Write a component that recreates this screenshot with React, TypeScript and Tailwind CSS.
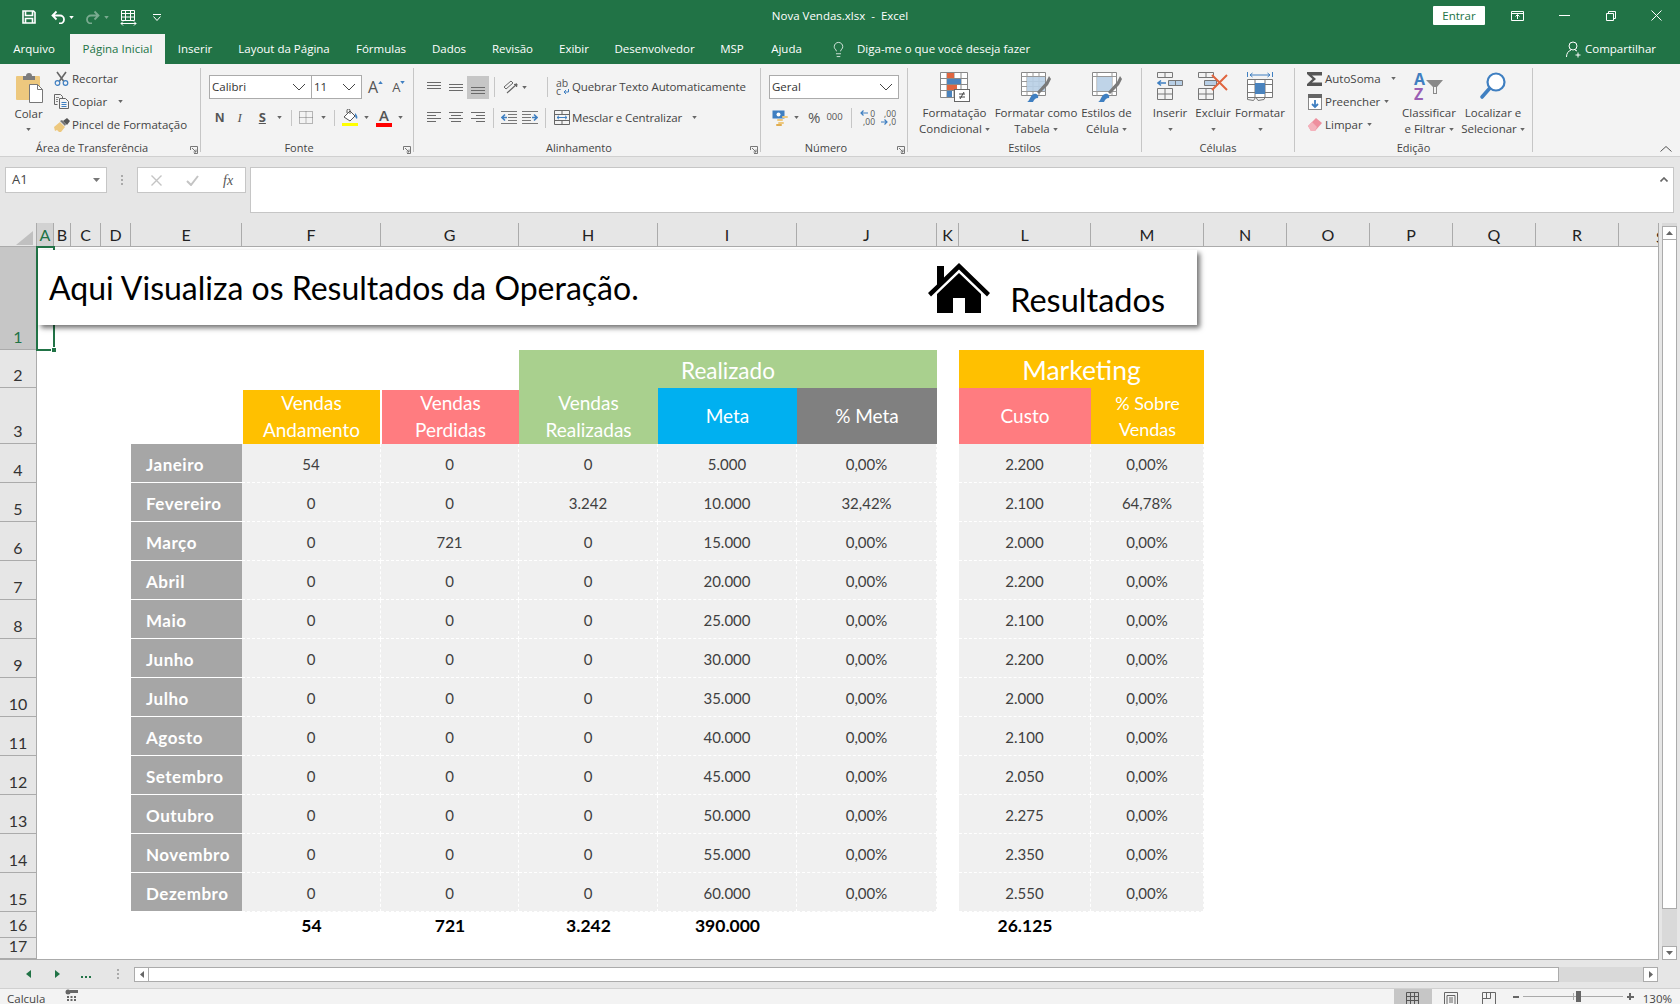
import React, { FC, ReactNode } from 'react'
import { Lightbulb } from 'lucide-react'

type Sale = { name: string; f: string; g: string; h: string; i: string; j: string; l: string; m: string }

const SALES: Sale[] = [
  { name: 'Janeiro', f: '54', g: '0', h: '0', i: '5.000', j: '0,00%', l: '2.200', m: '0,00%' },
  { name: 'Fevereiro', f: '0', g: '0', h: '3.242', i: '10.000', j: '32,42%', l: '2.100', m: '64,78%' },
  { name: 'Março', f: '0', g: '721', h: '0', i: '15.000', j: '0,00%', l: '2.000', m: '0,00%' },
  { name: 'Abril', f: '0', g: '0', h: '0', i: '20.000', j: '0,00%', l: '2.200', m: '0,00%' },
  { name: 'Maio', f: '0', g: '0', h: '0', i: '25.000', j: '0,00%', l: '2.100', m: '0,00%' },
  { name: 'Junho', f: '0', g: '0', h: '0', i: '30.000', j: '0,00%', l: '2.200', m: '0,00%' },
  { name: 'Julho', f: '0', g: '0', h: '0', i: '35.000', j: '0,00%', l: '2.000', m: '0,00%' },
  { name: 'Agosto', f: '0', g: '0', h: '0', i: '40.000', j: '0,00%', l: '2.100', m: '0,00%' },
  { name: 'Setembro', f: '0', g: '0', h: '0', i: '45.000', j: '0,00%', l: '2.050', m: '0,00%' },
  { name: 'Outubro', f: '0', g: '0', h: '0', i: '50.000', j: '0,00%', l: '2.275', m: '0,00%' },
  { name: 'Novembro', f: '0', g: '0', h: '0', i: '55.000', j: '0,00%', l: '2.350', m: '0,00%' },
  { name: 'Dezembro', f: '0', g: '0', h: '0', i: '60.000', j: '0,00%', l: '2.550', m: '0,00%' }
]

const TABS = [
  { label: 'Inserir', w: 'w-[60px]' },
  { label: 'Layout da Página', w: 'w-[118px]' },
  { label: 'Fórmulas', w: 'w-[76px]' },
  { label: 'Dados', w: 'w-[60px]' },
  { label: 'Revisão', w: 'w-[67px]' },
  { label: 'Exibir', w: 'w-[56px]' },
  { label: 'Desenvolvedor', w: 'w-[105px]' },
  { label: 'MSP', w: 'w-[50px]' },
  { label: 'Ajuda', w: 'w-[59px]' }
]

const COLUMNS = ['B', 'C', 'D', 'E', 'F', 'G', 'H', 'I', 'J', 'K', 'L', 'M', 'N', 'O', 'P', 'Q', 'R']

const styles = {
  cell: 'flex items-center justify-center border-r border-b border-dashed border-white bg-[#f0f0f0] pt-[2px] text-[15px] text-[#404040]',
  total: 'flex items-center justify-center pt-[2px] text-[17.5px] font-bold text-black',
  rowHead: 'col-start-1 flex items-end justify-center overflow-hidden border-r border-b border-[#ababab] bg-[#e6e6e6] pb-[3px] text-[16px] leading-[18px] text-[#333]',
  colHead: 'flex items-center justify-center border-r border-b border-[#ababab] bg-[#e6e6e6] text-[16px] text-[#222]'
}

const Caret: FC<{ className?: string }> = ({ className = '' }) => (
  <svg viewBox="0 0 6 4" className={`h-[3px] w-[5px] shrink-0 ${className}`}>
    <path d="M0 0h6L3 4z" fill="#666" />
  </svg>
)

const Launcher = () => (
  <svg viewBox="0 0 8 8" className="absolute right-[2px] bottom-[-2px] h-[8px] w-[8px]" fill="none" stroke="#777" strokeWidth="1">
    <path d="M.5 4V.5H7.5V7.5H4M2 2l4 4M3.5 6H6V3.5" />
  </svg>
)

const Group: FC<{ label: string; launcher?: boolean; w: string; children: ReactNode }> = ({ label, launcher, w, children }) => (
  <div className={`relative mt-[4px] flex h-[84px] shrink-0 flex-col border-r border-[#c6c6c6] ${w}`}>
    <div className="flex h-[70px] overflow-visible">{children}</div>
    <div className={`mt-auto -mb-[3px] h-[15px] text-center text-[11px] leading-[15px] whitespace-nowrap text-[#444] ${launcher ? 'pr-[16px]' : ''}`}>{label}</div>
    {launcher && <Launcher />}
  </div>
)

const SmallRow: FC<{ icon: ReactNode; text: string; caret?: string }> = ({ icon, text, caret }) => (
  <div className="flex h-[23px] items-center whitespace-nowrap">
    <span className="flex w-[19px] shrink-0 justify-center">{icon}</span>
    <span className="ml-[1px]">{text}</span>
    {caret && <Caret className={caret} />}
  </div>
)

const BigButton: FC<{ w: string; icon: ReactNode; line1: string; line2?: string }> = ({ w, icon, line1, line2 }) => (
  <div className={`flex shrink-0 flex-col items-center pt-[4px] leading-[16px] whitespace-nowrap ${w}`}>
    <div className="flex h-[30px] items-start justify-center">{icon}</div>
    <div className="mt-[3px]">{line1}</div>
    <div className="flex h-[16px] items-center justify-center gap-[3px]">
      {line2}
      <Caret />
    </div>
  </div>
)

const SelectBox: FC<{ w: string; text: string; className?: string }> = ({ w, text, className = '' }) => (
  <div className={`flex h-[24px] shrink-0 items-center justify-between border border-[#ababab] bg-white pr-[5px] pl-[2px] text-[#333] ${w} ${className}`}>
    <span>{text}</span>
    <svg viewBox="0 0 14 8" className="h-[8px] w-[14px]" fill="none" stroke="#444" strokeWidth="1">
      <path d="M1 1l6 6 6-6" />
    </svg>
  </div>
)

const Lines: FC<{ kind: 'top' | 'middle' | 'bottom' | 'left' | 'center' | 'right' }> = ({ kind }) => {
  const paths = {
    top: 'M0 1.5h14M0 4.5h14M0 7.5h14',
    middle: 'M0 3.5h14M0 6.5h14M0 9.5h14',
    bottom: 'M0 6.5h14M0 9.5h14M0 12.5h14',
    left: 'M0 1.5h14M0 4.5h9M0 7.5h14M0 10.5h9',
    center: 'M0 1.5h14M2 4.5h10M0 7.5h14M2 10.5h10',
    right: 'M0 1.5h14M5 4.5h9M0 7.5h14M5 10.5h9'
  }
  return (
    <svg viewBox="0 0 14 13" className="h-[13px] w-[14px]" fill="none" stroke="#6a6a6a" strokeWidth="1">
      <path d={paths[kind]} />
    </svg>
  )
}

const ColarIcon = () => (
  <svg viewBox="0 0 28 31" className="h-[31px] w-[28px]">
    <rect x="1" y="4" width="24" height="24" rx="1" fill="#edc87e" />
    <path d="M8 4h3a3 3 0 016 0h3v4H8z" fill="#7c7c7c" />
    <path d="M14.5 12.5h8l5 5v13h-13z" fill="#fff" stroke="#777" />
    <path d="M22.5 12.5v5h5" fill="none" stroke="#777" />
  </svg>
)

const ScissorsIcon = () => (
  <svg viewBox="0 0 15 15" className="h-[15px] w-[15px]" fill="none">
    <path d="M3 1l6.5 9M12 1L5.5 10" stroke="#666" strokeWidth="1.6" />
    <circle cx="3.5" cy="12" r="2.3" stroke="#3f7fc1" strokeWidth="1.2" />
    <circle cx="11.5" cy="12" r="2.3" stroke="#3f7fc1" strokeWidth="1.2" />
  </svg>
)

const CopyIcon = () => (
  <svg viewBox="0 0 15 15" className="h-[15px] w-[15px]" fill="none" stroke="#666">
    <path d="M.5.5h6l2 2v2M.5.5v10h3" />
    <path d="M5.5 4.5h6l3 3v7h-9z" fill="#f3f3f3" />
    <path d="M7.5 8.5h5M7.5 10.5h5M7.5 12.5h5" stroke="#3f7fc1" />
    <path d="M2 3.5h3M2 5.5h2M2 7.5h2" stroke="#888" />
  </svg>
)

const BrushIcon = () => (
  <svg viewBox="0 0 16 14" className="h-[14px] w-[16px]">
    <path d="M0 9l6-5 5 5-4 5H5L3 12 1 13z" fill="#edc87e" />
    <path d="M6 3l2-1 4 4-1 2z" fill="#777" />
    <path d="M9 3l4-3 3 3-3 4z" fill="#555" />
  </svg>
)

const BordersIcon = () => (
  <svg viewBox="0 0 14 13" className="h-[13px] w-[14px]" fill="none" stroke="#777" strokeDasharray="1 1">
    <path d="M.5.5h13v12H.5zM7 .5v12M.5 6.5h13" />
  </svg>
)

const FillIcon = () => (
  <svg viewBox="0 0 16 17" className="h-[17px] w-[16px]">
    <path d="M2 8l6-6 5 5-5 5z" fill="#fff" stroke="#555" />
    <path d="M5 4V1.5a1.5 1.5 0 013 0V5" fill="none" stroke="#555" />
    <path d="M13 4c2 2 3 4 2 6-2-1-2-3-2-6z" fill="#3f7fc1" />
    <rect y="14" width="16" height="3.5" fill="#ffff00" />
  </svg>
)

const FontColorIcon = () => (
  <div className="flex w-[16px] flex-col items-center">
    <span className="text-[15px] leading-[13px] font-semibold text-[#555]">A</span>
    <span className="mt-[1px] h-[4px] w-[16px] bg-[#ff0000]" />
  </div>
)

const OrientationIcon = () => (
  <svg viewBox="0 0 16 14" className="h-[14px] w-[16px]" fill="none" stroke="#666">
    <path d="M2 7l7-6 2 2-7 6z" />
    <path d="M5 13l10-9M15 4l-3 .5M15 4l-.5 3" strokeWidth="1.2" />
  </svg>
)

const IndentIcon: FC<{ flip?: boolean }> = ({ flip }) => (
  <svg viewBox="0 0 16 13" className={`h-[13px] w-[16px] ${flip ? '-scale-x-100' : ''}`} fill="none">
    <path d="M0 .5h16M7 3.5h9M7 6.5h9M7 9.5h9M0 12.5h16" stroke="#777" />
    <path d="M6 6.5H1M4 3.5l-3 3 3 3" stroke="#3f7fc1" strokeWidth="1.6" />
  </svg>
)

const WrapIcon = () => (
  <svg viewBox="0 0 13 17" className="h-[17px] w-[13px] overflow-visible">
    <text x="0" y="8" fontFamily="Open Sans, sans-serif" fontSize="10.5" fill="#555">ab</text>
    <text x="0" y="16" fontFamily="Open Sans, sans-serif" fontSize="10.5" fill="#555">c</text>
    <path d="M12.5 10v3H8M10 11l-2 2 2 2" fill="none" stroke="#3f7fc1" />
  </svg>
)

const MergeIcon = () => (
  <svg viewBox="0 0 16 15" className="h-[15px] w-[16px]" fill="none" stroke="#666">
    <path d="M.5.5h15v14H.5zM.5 4.5h15M.5 10.5h15M8 .5v4M8 10.5v4" />
    <path d="M3 7.5h10M5 5.8L3 7.5l2 1.7M11 5.8l2 1.7-2 1.7" stroke="#3f7fc1" />
  </svg>
)

const CurrencyIcon = () => (
  <svg viewBox="0 0 16 16" className="h-[16px] w-[16px]">
    <rect x=".5" y=".5" width="12" height="8" fill="#3f7fc1" />
    <circle cx="6.5" cy="4.5" r="2" fill="#fff" />
    <rect x="5" y="9" width="6" height="2" rx="1" fill="#edc87e" />
    <rect x="6" y="12" width="6" height="2" rx="1" fill="#edc87e" />
    <rect x="10" y="6" width="6" height="2" rx="1" fill="#edc87e" />
    <rect x="4" y="14" width="6" height="2" rx="1" fill="#e0ad50" />
  </svg>
)

// stacked digits with the small blue arrow, decrease and increase decimals
const DecimalIcon: FC<{ up?: boolean }> = ({ up }) => (
  <svg viewBox="0 0 15 17" className="h-[17px] w-[15px] overflow-visible">
    <text x="15" y="7.5" textAnchor="end" fontFamily="Open Sans, sans-serif" fontSize="8.5" fill="#555">{up ? '0' : ',00'}</text>
    <text x="15" y="15.5" textAnchor="end" fontFamily="Open Sans, sans-serif" fontSize="8.5" fill="#555">{up ? ',00' : ',0'}</text>
    {up ? (
      <path d="M8 4H1M3.5 1.5L1 4l2.5 2.5" fill="none" stroke="#3f7fc1" strokeWidth="1.2" />
    ) : (
      <path d="M0 13h6M3.5 10.5L6 13l-2.5 2.5" fill="none" stroke="#3f7fc1" strokeWidth="1.2" />
    )}
  </svg>
)

const CondFormatIcon = () => (
  <svg viewBox="0 0 30 30" className="h-[30px] w-[30px]">
    <path d="M.5.5h27v25H.5zM7 .5v25M14 .5v25M21 .5v25M.5 6.5h27M.5 12.5h27M.5 18.5h27" fill="#fff" stroke="#888" />
    <rect x="7" y="1" width="7" height="5" fill="#e0653f" />
    <rect x="7" y="7" width="14" height="5" fill="#4a83bd" />
    <rect x="7" y="13" width="10" height="5" fill="#e0653f" />
    <rect x="7" y="19" width="5" height="6" fill="#4a83bd" />
    <rect x="14.5" y="17.5" width="15" height="12" fill="#fff" stroke="#666" />
    <path d="M19 22h6M19 25h6M24 20l-4 7" stroke="#444" fill="none" />
  </svg>
)

const TableStyleIcon: FC<{ single?: boolean }> = ({ single }) => (
  <svg viewBox="0 0 30 30" className="h-[30px] w-[30px]">
    <path d="M.5.5h24v23H.5z" fill="#fff" stroke="#888" />
    <path d={single ? 'M.5 4.5h24M.5 19.5h24M5 .5v23M20 .5v23' : 'M.5 4.5h24M.5 9.5h24M.5 14.5h24M.5 19.5h24M6 .5v23M12 .5v23M18 .5v23'} stroke="#999" fill="none" />
    <rect x={single ? 5 : 6} y="5" width={single ? 15 : 18} height="14" fill="#b8cfe6" opacity="0.9" />
    <path d="M16 20l9-10 3-6 2 3-3 6-9 9z" fill="#7a7a7a" />
    <path d="M6 30c3-1 3-7 7-8 3-1 5 2 4 4-3 0-4 2-5 4z" fill="#3f7fc1" />
  </svg>
)

const InsertIcon = () => (
  <svg viewBox="0 0 26 28" className="h-[28px] w-[26px]" fill="none" stroke="#777">
    <path d="M.5.5h15v5H.5zM8 .5v5M.5 16.5h15v11H.5zM.5 22h15M8 16.5v11" />
    <path d="M11.5 8.5h14v5h-14zM18.5 8.5v5" fill="#b8cfe6" />
    <path d="M9 11H1M4 8.5L1 11l3 2.5" stroke="#3f7fc1" strokeWidth="1.5" />
  </svg>
)

const DeleteIcon = () => (
  <svg viewBox="0 0 30 28" className="h-[28px] w-[30px]" fill="none" stroke="#777">
    <path d="M.5.5h15v5H.5zM8 .5v5M.5 16.5h15v11H.5zM.5 22h15M8 16.5v11" />
    <path d="M6.5 8.5h12v5h-12z" fill="#b8cfe6" />
    <path d="M14 3l15 15M29 3L14 18" stroke="#e0653f" strokeWidth="2" />
  </svg>
)

const FormatIcon = () => (
  <svg viewBox="0 0 26 30" className="h-[30px] w-[26px]" fill="none" stroke="#777">
    <path d="M3 3h20M3 3l2.5-2M3 3l2.5 2M23 3l-2.5-2M23 3l-2.5 2M.5 0v5M25.5 0v5" stroke="#3f7fc1" />
    <path d="M.5 7.5h25v18H.5zM8 7.5v18M18 7.5v18M.5 12.5h25M.5 20.5h25" fill="#fff" />
    <rect x="8" y="11" width="10" height="11" fill="#4a83bd" stroke="none" />
    <path d="M.5 25.5v2l6 1 2-3M9 25.5l2 3 6-1 1-2" />
  </svg>
)

const SortIcon = () => (
  <svg viewBox="0 0 30 30" className="h-[30px] w-[30px] overflow-visible">
    <text x="0" y="13" fontFamily="Open Sans, sans-serif" fontWeight="700" fontSize="16" fill="#3f7fc1">A</text>
    <text x="0" y="28" fontFamily="Open Sans, sans-serif" fontWeight="700" fontSize="16" fill="#9a5fb4">Z</text>
    <path d="M12 8h17l-6 7v7h-4v-7z" fill="#8a8a8a" />
    <path d="M20 15v6h2v-6z" fill="#f3f3f3" />
  </svg>
)

const FindIcon = () => (
  <svg viewBox="0 0 28 28" className="h-[28px] w-[28px]" fill="none" stroke="#3f7fc1">
    <circle cx="17" cy="10" r="8.5" strokeWidth="2.2" fill="#fff" />
    <path d="M10.5 16.5L3 25" strokeWidth="3.6" strokeLinecap="round" />
  </svg>
)

const SigmaIcon = () => (
  <svg viewBox="0 0 15 14" className="h-[14px] w-[15px]">
    <path d="M0 0h15v3.5H5l4 3.5-4 3.5h10V14H0v-2l5.5-5L0 2z" fill="#555" />
  </svg>
)

const FillDownIcon = () => (
  <svg viewBox="0 0 14 16" className="h-[16px] w-[14px]">
    <rect x=".5" y=".5" width="13" height="15" fill="#fff" stroke="#888" />
    <rect width="14" height="4" fill="#666" />
    <path d="M7 6v7M4 10l3 3 3-3" fill="none" stroke="#3f7fc1" strokeWidth="1.8" />
  </svg>
)

const EraserIcon = () => (
  <svg viewBox="0 0 14 13" className="h-[13px] w-[14px]">
    <path d="M0 8l8-8 6 5-7 8H3z" fill="#ee8f9e" />
    <path d="M0 8l4-4 5 5-2 4H3z" fill="#f4b2bc" />
  </svg>
)

const TitleBar = () => (
  <div className="grid h-[34px] grid-cols-3 items-center bg-[#217346] text-white">
    <div className="flex items-center pl-[22px]">
      <svg viewBox="0 0 14 14" className="h-[14px] w-[14px]" fill="none" stroke="#fff" strokeWidth="1.6">
        <path d="M1 1h10.5L13 2.5V13H1zM3.5 1v4.5h7V1M3.5 13V8.5h7V13" />
      </svg>
      <svg viewBox="0 0 14 14" className="ml-[15px] h-[14px] w-[14px]" fill="none" stroke="#fff" strokeWidth="1.8">
        <path d="M5.5 1.5L1.5 5.5l4 4M1.5 5.5H9a4 4 0 010 8H8" />
      </svg>
      <Caret className="ml-[4px] [&_path]:fill-white" />
      <svg viewBox="0 0 14 14" className="ml-[12px] h-[14px] w-[14px] opacity-40" fill="none" stroke="#fff" strokeWidth="1.8">
        <path d="M8.5 1.5l4 4-4 4M12.5 5.5H5a4 4 0 000 8h1" />
      </svg>
      <Caret className="ml-[4px] opacity-40 [&_path]:fill-white" />
      <svg viewBox="0 0 17 17" className="ml-[11px] h-[17px] w-[17px]" fill="none" stroke="#fff">
        <path d="M1.5 1.5h13v10h-13zM1.5 4.5h13M5.5 1.5v10M10.5 1.5v10M1.5 8h13" />
        <path d="M1 14.5h15M3 12.5l-2 2 2 2M14 12.5l2 2-2 2" />
      </svg>
      <svg viewBox="0 0 8 7" className="ml-[16px] h-[7px] w-[8px]" fill="none" stroke="#fff">
        <path d="M0 .5h8M.5 2.5l3.5 4 3.5-4" />
      </svg>
    </div>
    <div className="mb-[2px] text-center whitespace-pre">Nova Vendas.xlsx  -  Excel</div>
    <div className="flex items-center justify-end">
      <div className="mb-[3px] flex h-[19px] w-[52px] items-center justify-center rounded-[1px] bg-white text-[#217346]">Entrar</div>
      <svg viewBox="0 0 13 10" className="mb-[3px] ml-[26px] h-[10px] w-[13px]" fill="none" stroke="#fff">
        <path d="M.5.5h12v9H.5zM.5 2.5h12M6.5 8V4M4.5 5.5l2-2 2 2" />
      </svg>
      <div className="mb-[3px] ml-[35px] h-[1px] w-[11px] bg-white" />
      <svg viewBox="0 0 10 10" className="mb-[3px] ml-[36px] h-[10px] w-[10px]" fill="none" stroke="#fff">
        <path d="M2.5 2.5V.5h7v7h-2M.5 2.5h7v7h-7z" />
      </svg>
      <svg viewBox="0 0 11 11" className="mr-[18px] mb-[3px] ml-[35px] h-[11px] w-[11px]" fill="none" stroke="#fff">
        <path d="M.5.5l10 10M10.5.5l-10 10" />
      </svg>
    </div>
  </div>
)

const TabBar = () => (
  <div className="flex h-[30px] items-stretch bg-[#217346] text-white">
    <div className="flex w-[68px] items-center justify-center">Arquivo</div>
    <div className="ml-[2px] flex w-[95px] items-center justify-center bg-[#f3f3f3] text-[#217346]">Página Inicial</div>
    {TABS.map((tab) => (
      <div key={tab.label} className={`flex items-center justify-center ${tab.w}`}>
        {tab.label}
      </div>
    ))}
    <div className="ml-[14px] flex items-center">
      <Lightbulb size={17} strokeWidth={1.1} />
      <span className="ml-[10px]">Diga-me o que você deseja fazer</span>
    </div>
    <div className="mr-[24px] ml-auto flex items-center">
      <svg viewBox="0 0 16 17" className="h-[17px] w-[16px]" fill="none" stroke="#fff">
        <circle cx="7" cy="5" r="4" />
        <path d="M.5 16c0-4 2-6 4.5-7M9 9l2 1M12 11.5v5M9.5 14h5" />
      </svg>
      <span className="ml-[3px]">Compartilhar</span>
    </div>
  </div>
)

const Ribbon = () => (
  <div className="flex h-[93px] border-b border-[#d0d0d0] bg-[#f3f3f3] text-[#444]">
    <Group label="Área de Transferência" launcher w="w-[201px]">
      <div className="flex w-[52px] shrink-0 flex-col items-center pt-[4px] pl-[5px]">
        <div className="h-[31px]">
          <ColarIcon />
        </div>
        <div className="mt-[3px] leading-[16px]">Colar</div>
        <Caret className="mt-[6px]" />
      </div>
      <div className="-mt-[1px] flex flex-col">
        <SmallRow icon={<ScissorsIcon />} text="Recortar" />
        <SmallRow icon={<CopyIcon />} text="Copiar" caret="ml-[11px]" />
        <SmallRow icon={<BrushIcon />} text="Pincel de Formatação" />
      </div>
    </Group>

    <Group label="Fonte" launcher w="w-[213px]">
      <div className="flex flex-col pt-[7px] pl-[8px]">
        <div className="flex h-[24px] items-center">
          <SelectBox w="w-[103px]" text="Calibri" />
          <SelectBox w="w-[51px]" text="11" className="-ml-[1px]" />
          <span className="ml-[6px] text-[16px] leading-none text-[#555]">A</span>
          <svg viewBox="0 0 6 4" className="mb-[10px] h-[3px] w-[5px]"><path d="M0 4l3-4 3 4z" fill="#3f7fc1" /></svg>
          <span className="ml-[9px] text-[13px] leading-none text-[#555]">A</span>
          <svg viewBox="0 0 6 4" className="mb-[10px] h-[3px] w-[5px]"><path d="M0 0h6L3 4z" fill="#3f7fc1" /></svg>
        </div>
        <div className="mt-[7px] flex h-[23px] items-center text-[13px] text-[#555]">
          <span className="ml-[6px] font-['Liberation_Sans',sans-serif] font-bold">N</span>
          <span className="ml-[13px] font-['Liberation_Serif',serif] italic">I</span>
          <span className="ml-[17px] font-bold underline">S</span>
          <Caret className="ml-[11px]" />
          <span className="ml-[9px] h-[16px] border-l border-[#c6c6c6]" />
          <span className="ml-[7px]"><BordersIcon /></span>
          <Caret className="ml-[8px]" />
          <span className="ml-[8px] h-[16px] border-l border-[#c6c6c6]" />
          <span className="ml-[7px]"><FillIcon /></span>
          <Caret className="ml-[6px]" />
          <span className="ml-[7px]"><FontColorIcon /></span>
          <Caret className="ml-[6px]" />
        </div>
      </div>
    </Group>

    <Group label="Alinhamento" launcher w="w-[347px]">
      <div className="flex flex-col pt-[7px] pl-[13px]">
        <div className="flex h-[24px] items-center">
          <Lines kind="top" />
          <span className="ml-[8px]"><Lines kind="middle" /></span>
          <span className="ml-[4px] flex h-[23px] w-[22px] items-center justify-center bg-[#c6c6c6]"><Lines kind="bottom" /></span>
          <span className="ml-[5px] h-[20px] border-l border-[#c6c6c6]" />
          <span className="ml-[7px]"><OrientationIcon /></span>
          <Caret className="ml-[4px]" />
          <span className="ml-[20px] h-[20px] border-l border-[#c6c6c6]" />
        </div>
        <div className="mt-[7px] flex h-[23px] items-center">
          <Lines kind="left" />
          <span className="ml-[8px]"><Lines kind="center" /></span>
          <span className="ml-[8px]"><Lines kind="right" /></span>
          <span className="ml-[8px] h-[20px] border-l border-[#c6c6c6]" />
          <span className="ml-[7px]"><IndentIcon /></span>
          <span className="ml-[5px]"><IndentIcon flip /></span>
          <span className="ml-[7px] h-[20px] border-l border-[#c6c6c6]" />
        </div>
      </div>
      <div className="flex flex-col pt-[7px] pl-[6px] whitespace-nowrap">
        <div className="flex h-[24px] items-center pl-[2px] tracking-[-0.01em]">
          <WrapIcon />
          <span className="ml-[3px]">Quebrar Texto Automaticamente</span>
        </div>
        <div className="mt-[7px] flex h-[23px] items-center tracking-[-0.01em]">
          <MergeIcon />
          <span className="ml-[2px]">Mesclar e Centralizar</span>
          <Caret className="ml-[10px]" />
        </div>
      </div>
    </Group>

    <Group label="Número" launcher w="w-[147px]">
      <div className="flex flex-col pt-[7px] pl-[8px]">
        <SelectBox w="w-[130px]" text="Geral" />
        <div className="mt-[7px] flex h-[23px] items-center">
          <span className="ml-[3px]"><CurrencyIcon /></span>
          <Caret className="ml-[6px]" />
          <span className="ml-[9px] text-[15px] text-[#555]">%</span>
          <span className="ml-[6px] text-[9.5px] text-[#555]">000</span>
          <span className="ml-[8px] h-[20px] border-l border-[#c6c6c6]" />
          <span className="ml-[8px]"><DecimalIcon up /></span>
          <span className="ml-[6px]"><DecimalIcon /></span>
        </div>
      </div>
    </Group>

    <Group label="Estilos" w="w-[234px]">
      <div className="w-[3px]" />
      <BigButton w="w-[87px]" icon={<CondFormatIcon />} line1="Formatação" line2="Condicional" />
      <BigButton w="w-[76px]" icon={<TableStyleIcon />} line1="Formatar como" line2="Tabela" />
      <BigButton w="w-[65px]" icon={<TableStyleIcon single />} line1="Estilos de" line2="Célula" />
    </Group>

    <Group label="Células" w="w-[153px]">
      <div className="w-[6px]" />
      <BigButton w="w-[44px]" icon={<InsertIcon />} line1="Inserir" />
      <BigButton w="w-[42px]" icon={<DeleteIcon />} line1="Excluir" />
      <BigButton w="w-[52px]" icon={<FormatIcon />} line1="Formatar" />
    </Group>

    <Group label="Edição" w="w-[238px]">
      <div className="-mt-[1px] flex w-[106px] shrink-0 flex-col pl-[10px]">
        <SmallRow icon={<SigmaIcon />} text="AutoSoma" caret="ml-[10px]" />
        <SmallRow icon={<FillDownIcon />} text="Preencher" caret="ml-[4px]" />
        <SmallRow icon={<EraserIcon />} text="Limpar" caret="ml-[4px]" />
      </div>
      <BigButton w="w-[56px]" icon={<SortIcon />} line1="Classificar" line2="e Filtrar" />
      <BigButton w="w-[72px]" icon={<FindIcon />} line1="Localizar e" line2="Selecionar" />
    </Group>

    <div className="flex flex-1 items-end justify-end pr-[8px] pb-[4px]">
      <svg viewBox="0 0 12 6" className="h-[6px] w-[12px]" fill="none" stroke="#555">
        <path d="M.5 5.5L6 .5l5.5 5" />
      </svg>
    </div>
  </div>
)

const FormulaBar = () => (
  <div className="flex h-[66px] items-start bg-[#e6e6e6] pt-[10px] pl-[5px] text-[#444]">
    <div className="flex h-[26px] w-[102px] items-center justify-between border border-[#c6c6c6] bg-white pr-[6px] pl-[6px] text-[13px]">
      A1
      <svg viewBox="0 0 7 4" className="h-[4px] w-[7px]"><path d="M0 0h7L3.5 4z" fill="#777" /></svg>
    </div>
    <div className="flex h-[26px] w-[30px] flex-col items-center justify-center gap-[2px]">
      <span className="h-[2px] w-[2px] bg-[#aaa]" />
      <span className="h-[2px] w-[2px] bg-[#aaa]" />
      <span className="h-[2px] w-[2px] bg-[#aaa]" />
    </div>
    <div className="flex h-[26px] w-[109px] items-center border border-[#c6c6c6] bg-white">
      <svg viewBox="0 0 11 11" className="ml-[13px] h-[11px] w-[11px]" fill="none" stroke="#c4c4c4" strokeWidth="1.4">
        <path d="M.5.5l10 10M10.5.5l-10 10" />
      </svg>
      <svg viewBox="0 0 13 11" className="ml-[24px] h-[11px] w-[13px]" fill="none" stroke="#c4c4c4" strokeWidth="2">
        <path d="M1 6l4 4 7-9" />
      </svg>
      <span className="ml-[24px] font-['Liberation_Serif',serif] text-[14px] text-[#555] italic">fx</span>
    </div>
    <div className="ml-[4px] flex h-[46px] w-[1424px] justify-end border border-[#c6c6c6] bg-white pt-[9px] pr-[5px]">
      <svg viewBox="0 0 8 5" className="h-[5px] w-[8px]" fill="none" stroke="#666" strokeWidth="1.6">
        <path d="M.5 4.5L4 1l3.5 3.5" />
      </svg>
    </div>
  </div>
)

const Banner = () => (
  <div className="absolute top-[27px] left-[38px] z-10 flex h-[75px] w-[1159px] bg-white shadow-[3px_3px_5px_rgba(0,0,0,0.55)]">
    <div className="flex-1 pt-[13px] pl-[11px] text-[32px] leading-[50px] text-black">Aqui Visualiza os Resultados da Operação.</div>
    <svg viewBox="0 0 62 50" className="mt-[13px] h-[50px] w-[62px] shrink-0">
      <path d="M31 0L62 30l-3 3.5L31 6.5 3 33.5 0 30 9 21.5V3h7v11.5z" />
      <path d="M31 10L53 31v19H37V35H25v15H9V31z" />
    </svg>
    <div className="mt-[30px] mr-[32px] ml-[20px] text-[32.5px] leading-[40px] text-black">Resultados</div>
  </div>
)

const Sheet = () => (
  <div className="relative flex-1 overflow-hidden border-r border-b border-[#ababab] bg-white font-['Lato',sans-serif]">
    <div className="grid grid-cols-[37px_17px_17px_30px_30px_111px_139px_138px_139px_139px_140px_22px_132px_113px_83px_83px_83px_83px_83px_40px] grid-rows-[24px_103px_38px_56px_repeat(12,39px)_26px_21px]">
      <div className="relative border-r border-b border-[#ababab] bg-[#e6e6e6]">
        <svg viewBox="0 0 17 14" className="absolute right-[3px] bottom-[1px] h-[14px] w-[17px]"><path d="M17 0v14H0z" fill="#c0c0c0" /></svg>
      </div>
      <div className="flex items-center justify-center border-r border-b border-[#ababab] bg-[#d2d2d2] text-[16px] text-[#217346]">A</div>
      {COLUMNS.map((col) => (
        <div key={col} className={styles.colHead}>{col}</div>
      ))}
      <div className="overflow-hidden border-b border-[#ababab] bg-[#e6e6e6] pt-[2px] pl-[37px] text-[16px] text-[#222]">S</div>

      <div className="col-start-1 row-start-2 flex items-end justify-center border-r border-b border-[#ababab] bg-[#c6c6c6] pb-[3px] text-[16px] leading-[18px] text-[#217346]">1</div>
      <div className={`${styles.rowHead} row-start-3`}>2</div>
      <div className={`${styles.rowHead} row-start-4`}>3</div>

      <div className="col-span-3 col-start-9 row-start-3 flex items-center justify-center bg-[#a9d08e] pt-[3px] text-[22.5px] text-white">Realizado</div>
      <div className="col-span-2 col-start-13 row-start-3 flex items-center justify-center bg-[#ffc000] pt-[3px] text-[26.5px] text-white">Marketing</div>

      <div className="col-start-7 row-start-4 flex items-end justify-center border-t-2 border-r border-l border-white bg-[#ffc000] pb-[1px] text-center text-[19px] leading-[27px] text-white">Vendas<br />Andamento</div>
      <div className="col-start-8 row-start-4 flex items-end justify-center border-t-2 border-l border-white bg-[#ff7c80] pb-[1px] text-center text-[19px] leading-[27px] text-white">Vendas<br />Perdidas</div>
      <div className="col-start-9 row-start-4 flex items-end justify-center bg-[#a9d08e] pb-[1px] text-center text-[19px] leading-[27px] text-white">Vendas<br />Realizadas</div>
      <div className="col-start-10 row-start-4 flex items-center justify-center bg-[#00b0f0] text-[19px] text-white">Meta</div>
      <div className="col-start-11 row-start-4 flex items-center justify-center bg-[#808080] text-[19px] text-white">% Meta</div>
      <div className="col-start-13 row-start-4 flex items-center justify-center bg-[#ff7c80] text-[19px] text-white">Custo</div>
      <div className="col-start-14 row-start-4 flex items-end justify-center bg-[#ffc000] pb-[2px] text-center text-[18px] leading-[26px] text-white">% Sobre<br />Vendas</div>

      {SALES.map((sale, i) => (
        <React.Fragment key={sale.name}>
          <div className={styles.rowHead}>{i + 4}</div>
          <div className="col-start-6 flex items-center border-b border-white bg-[#a6a6a6] pt-[3px] pl-[15px] text-[17px] font-bold tracking-[0.03em] text-white">{sale.name}</div>
          <div className={styles.cell}>{sale.f}</div>
          <div className={styles.cell}>{sale.g}</div>
          <div className={styles.cell}>{sale.h}</div>
          <div className={styles.cell}>{sale.i}</div>
          <div className={styles.cell}>{sale.j}</div>
          <div className={`${styles.cell} col-start-13`}>{sale.l}</div>
          <div className={styles.cell}>{sale.m}</div>
        </React.Fragment>
      ))}

      <div className={styles.rowHead}>16</div>
      <div className={`${styles.total} col-start-7`}>54</div>
      <div className={styles.total}>721</div>
      <div className={styles.total}>3.242</div>
      <div className={styles.total}>390.000</div>
      <div className={`${styles.total} col-start-13`}>26.125</div>
      <div className={styles.rowHead}>17</div>
    </div>

    <div className="absolute top-[23px] left-[36px] h-[105px] w-[19px] border-2 border-[#217346]">
      <span className="absolute -right-[4px] -bottom-[4px] h-[6px] w-[6px] border border-white bg-[#217346]" />
    </div>
    <Banner />
  </div>
)

const VerticalScroll = () => (
  <div className="ml-[3px] flex h-full w-[15px] flex-col bg-[#d9d9d9] pt-[3px]">
    <div className="flex h-[14px] items-center justify-center border border-[#ababab] bg-white">
      <svg viewBox="0 0 7 4" className="h-[4px] w-[7px]"><path d="M0 4l3.5-4L7 4z" fill="#666" /></svg>
    </div>
    <div className="h-[669px] border-x border-b border-[#ababab] bg-white" />
    <div className="mt-auto flex h-[14px] items-center justify-center border border-[#ababab] bg-white">
      <svg viewBox="0 0 7 4" className="h-[4px] w-[7px]"><path d="M0 0h7L3.5 4z" fill="#666" /></svg>
    </div>
  </div>
)

const SheetTabs = () => (
  <div className="flex h-[28px] items-center bg-[#e6e6e6]">
    <svg viewBox="0 0 5 8" className="ml-[26px] h-[8px] w-[5px]"><path d="M5 0v8L0 4z" fill="#217346" /></svg>
    <svg viewBox="0 0 5 8" className="ml-[24px] h-[8px] w-[5px]"><path d="M0 0v8l5-4z" fill="#217346" /></svg>
    <span className="ml-[21px] flex gap-[2px] pt-[5px]">
      <span className="h-[2px] w-[2px] bg-[#217346]" />
      <span className="h-[2px] w-[2px] bg-[#217346]" />
      <span className="h-[2px] w-[2px] bg-[#217346]" />
    </span>
    <span className="ml-[26px] flex flex-col gap-[2px]">
      <span className="h-[2px] w-[2px] bg-[#aaa]" />
      <span className="h-[2px] w-[2px] bg-[#aaa]" />
      <span className="h-[2px] w-[2px] bg-[#aaa]" />
    </span>
    <div className="ml-[15px] flex h-[15px] w-[1524px] bg-[#d9d9d9]">
      <div className="flex w-[15px] items-center justify-center border border-[#ababab] bg-white">
        <svg viewBox="0 0 4 7" className="h-[7px] w-[4px]"><path d="M4 0v7L0 3.5z" fill="#666" /></svg>
      </div>
      <div className="w-[1410px] border-y border-r border-[#ababab] bg-white" />
      <div className="ml-auto flex w-[15px] items-center justify-center border border-[#ababab] bg-white">
        <svg viewBox="0 0 4 7" className="h-[7px] w-[4px]"><path d="M0 0v7l4-3.5z" fill="#666" /></svg>
      </div>
    </div>
  </div>
)

const StatusBar = () => (
  <div className="flex h-[16px] items-start overflow-hidden border-t border-[#d0d0d0] bg-[#f3f3f3] text-[11.5px] leading-[19px] text-[#444]">
    <span className="ml-[7px]">Calcula</span>
    <svg viewBox="0 0 13 13" className="ml-[20px] h-[13px] w-[13px]" fill="#666">
      <circle cx="3" cy="3" r="2.5" />
      <path d="M5 1h8v3H5zM2 7h2v2H2zM5.5 7h2v2h-2zM9 7h2v2H9zM2 10h2v2H2zM5.5 10h2v2h-2zM9 10h2v2H9z" />
    </svg>
    <div className="ml-auto flex h-full items-start">
      <div className="flex h-[15px] w-[38px] justify-center bg-[#c6c6c6] pt-[3px]">
        <svg viewBox="0 0 13 13" className="h-[13px] w-[13px]" fill="none" stroke="#555">
          <path d="M.5.5h12v12H.5zM4.5.5v12M8.5.5v12M.5 4.5h12M.5 8.5h12" />
        </svg>
      </div>
      <svg viewBox="0 0 14 13" className="mt-[3px] ml-[12px] h-[13px] w-[14px]" fill="none" stroke="#666">
        <path d="M.5.5h13v13H.5zM3 3.5h8v9H3zM5 6h4M5 8h4M5 10h4" />
      </svg>
      <svg viewBox="0 0 14 13" className="mt-[3px] ml-[24px] h-[13px] w-[14px]" fill="none" stroke="#666">
        <path d="M.5.5h13v13H.5zM.5 6.5h8V.5M4.5.5v6" />
      </svg>
      <div className="ml-[17px] flex h-[15px] items-center">
        <span className="h-[2px] w-[6px] bg-[#666]" />
        <div className="relative ml-[4px] h-[1px] w-[100px] bg-[#aaa]">
          <span className="absolute top-[-3px] left-[50px] h-[7px] w-[1px] bg-[#aaa]" />
          <span className="absolute top-[-5px] left-[53px] h-[11px] w-[5px] bg-[#666]" />
        </div>
        <span className="relative ml-[4px] h-[2px] w-[7px] bg-[#666]">
          <span className="absolute top-[-2.5px] left-[2.5px] h-[7px] w-[2px] bg-[#666]" />
        </span>
      </div>
      <span className="mr-[8px] ml-[9px]">130%</span>
    </div>
  </div>
)

export default function App() {
  return (
    <div className="flex h-[1004px] w-[1680px] flex-col overflow-hidden bg-[#e6e6e6] font-['Open_Sans',sans-serif] text-[11.5px]">
      <TitleBar />
      <TabBar />
      <Ribbon />
      <FormulaBar />
      <div className="flex h-[737px]">
        <Sheet />
        <div className="w-[21px]">
          <VerticalScroll />
        </div>
      </div>
      <SheetTabs />
      <StatusBar />
    </div>
  )
}
